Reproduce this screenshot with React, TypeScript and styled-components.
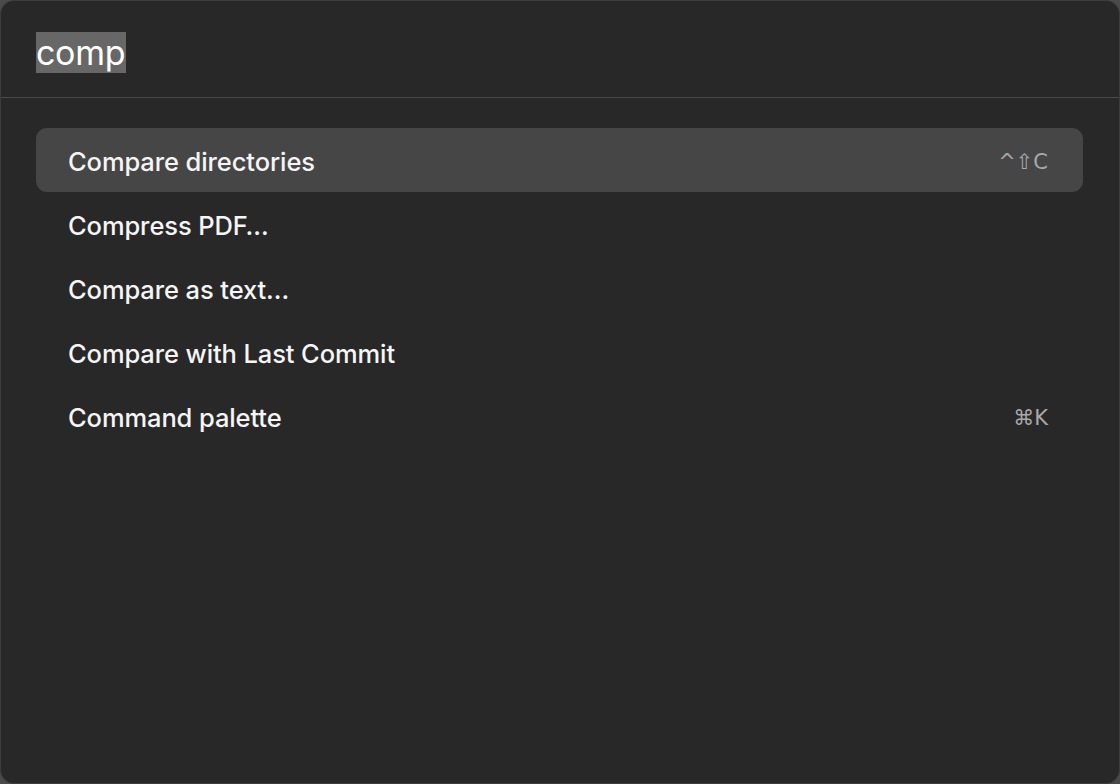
import { createGlobalStyle, styled } from 'styled-components';

const GlobalStyle = createGlobalStyle`
  html, body {
    margin: 0;
    padding: 0;
    background: #4a4a4a;
  }
  body {
    font-family: Inter, "Noto Sans", "DejaVu Sans", sans-serif;
    -webkit-font-smoothing: antialiased;
  }
`;

type Command = {
  label: string;
  shortcut?: string;
};

const commands: Command[] = [
  { label: 'Compare directories', shortcut: '^⇧C' },
  { label: 'Compress PDF…' },
  { label: 'Compare as text…' },
  { label: 'Compare with Last Commit' },
  { label: 'Command palette', shortcut: '⌘K' },
];

const App = () => {
  return (
    <>
      <GlobalStyle />
      <Palette>
        <SearchBar>
          <Query>comp</Query>
        </SearchBar>
        <List>
          {commands.map((command, index) => (
            <Row key={command.label} $active={index === 0}>
              <Label>{command.label}</Label>
              {command.shortcut && <Shortcut>{command.shortcut}</Shortcut>}
            </Row>
          ))}
        </List>
      </Palette>
    </>
  );
};

export default App;

const Palette = styled.div`
  box-sizing: border-box;
  width: 1120px;
  height: 784px;
  display: flex;
  flex-direction: column;
  background: #282828;
  border: 1px solid #3c3c3c;
  border-radius: 14px;
  overflow: hidden;
`;

const SearchBar = styled.div`
  height: 97px;
  display: flex;
  align-items: center;
  padding: 6px 35px 0;
  box-sizing: border-box;
  border-bottom: 1.5px solid #4a4a4a;
`;

const Query = styled.span`
  font-size: 34px;
  line-height: 41px;
  color: #ffffff;
  background: #676767;
  letter-spacing: -0.3px;
  padding-right: 1px;
`;

const List = styled.div`
  display: flex;
  flex-direction: column;
  padding: 30px 36px 0 35px;
`;

const Row = styled.div<{ $active: boolean }>`
  height: 64px;
  display: flex;
  align-items: center;
  justify-content: space-between;
  padding: 0 35px 0 32px;
  border-radius: 11px;
  background: ${({ $active }) => ($active ? '#464646' : 'transparent')};
`;

const Label = styled.span`
  font-size: 25.5px;
  font-weight: 500;
  color: #f5f5f5;
  letter-spacing: -0.1px;
  padding-top: 2px;
`;

const Shortcut = styled.span`
  font-family: "DejaVu Sans", Inter, sans-serif;
  font-size: 21px;
  font-weight: 500;
  color: #a8a8a8;
  padding-top: 4px;
`;
